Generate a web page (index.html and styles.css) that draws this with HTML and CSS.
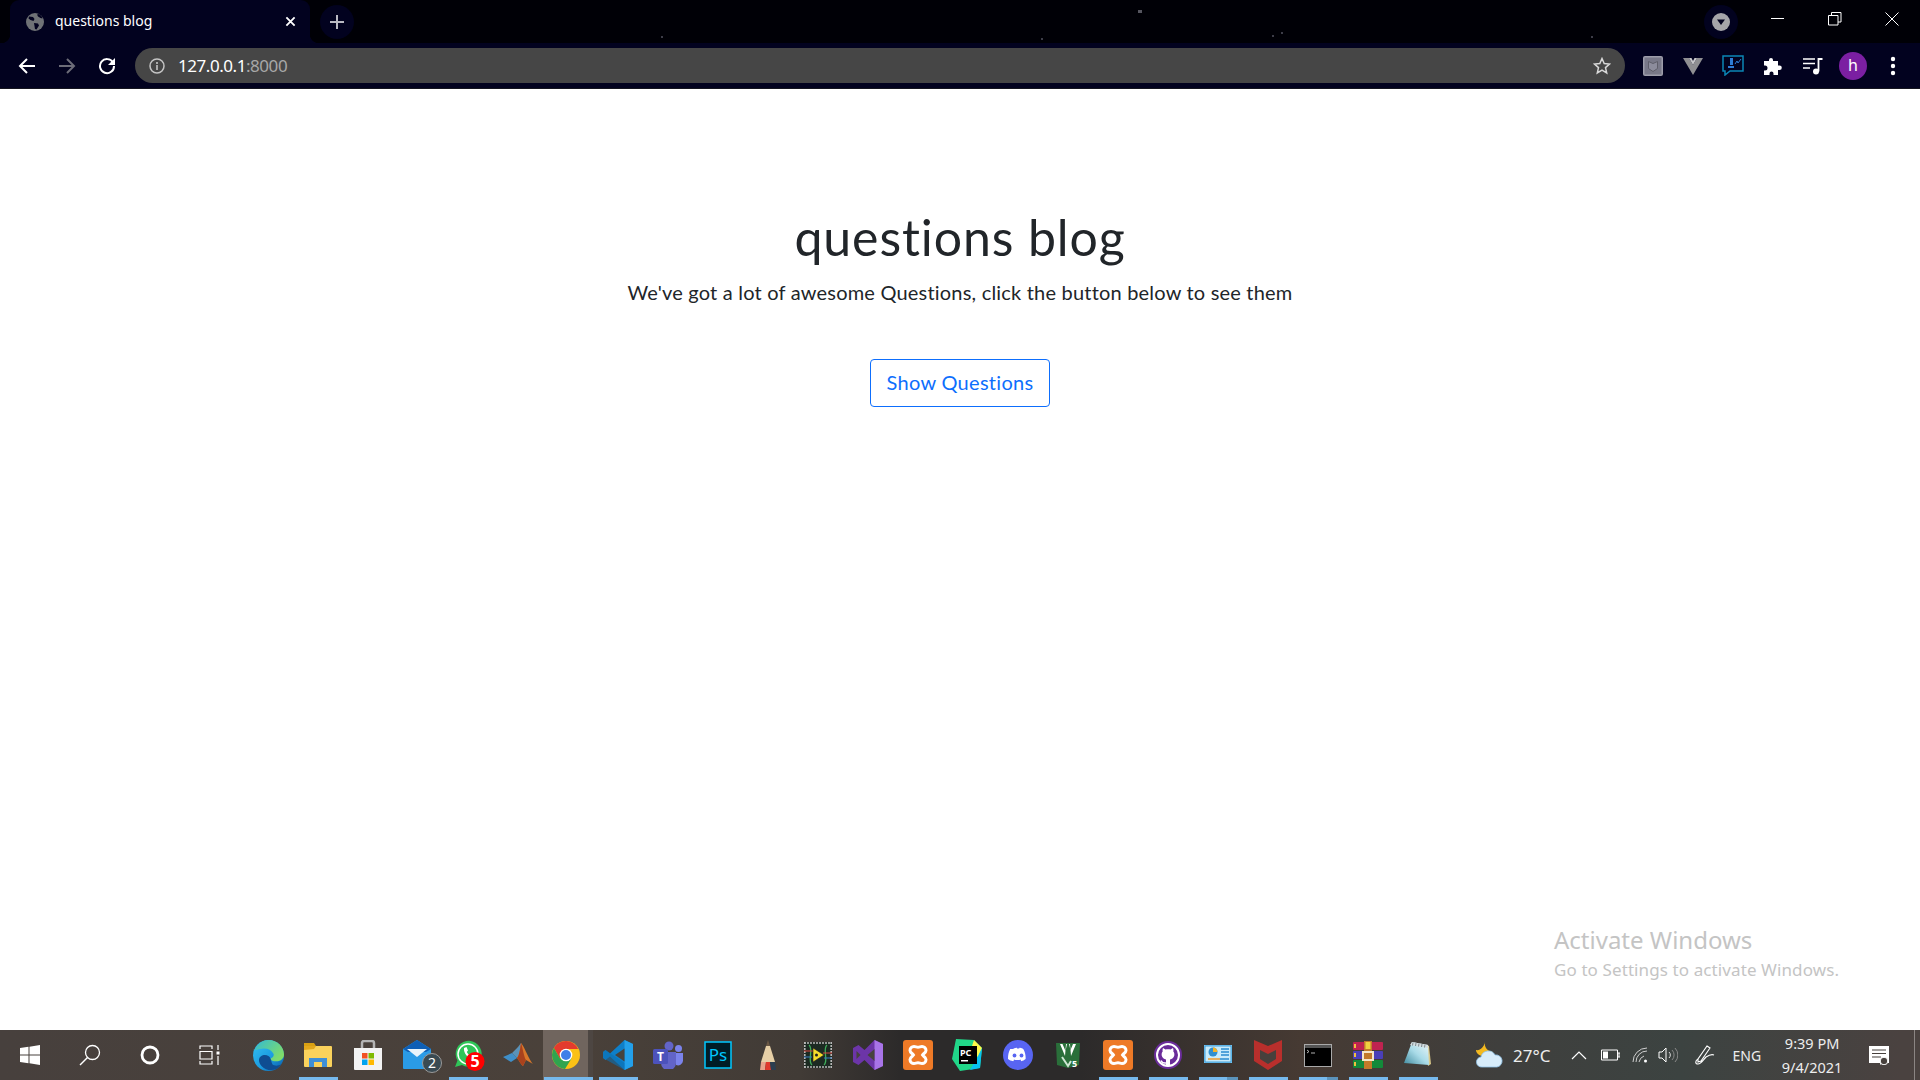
FILE: index.html
```html
<!DOCTYPE html>
<html lang="en">

<head>
    <meta charset="UTF-8">
    <meta name="viewport" content="width=device-width, initial-scale=1.0">
    <title>questions blog</title>
    <link rel="stylesheet" href="styles.css">
</head>

<body>

    <!-- browser tab row -->
    <div class="tabstrip">
        <i class="speck s1"></i><i class="speck s2"></i><i class="speck s3"></i><i class="speck s4"></i><i class="speck s5"></i><i class="speck s6"></i>
        <div class="tab">
            <svg class="favicon" viewBox="0 0 18 18"><circle cx="9" cy="9" r="9" fill="#6f7276"/><path d="M3 3.5l4 .5 1.5 2-1 2-3-1-2-1.500zM8 10l4 .5 1 2-2.500 4-1.500-.5-.5-3zM11 1.500l1 2 2.500 1.500 2 .5-1-2.500-2.500-2z" fill="#02021f"/></svg>
            <span class="tab-title">questions blog</span>
            <svg class="tab-close" viewBox="0 0 12 12"><path d="M1.5 1.5l9 9M10.5 1.5l-9 9" stroke="#fff" stroke-width="2"/></svg>
        </div>
        <div class="new-tab">
            <svg viewBox="0 0 16 16" width="16" height="16"><path d="M8 1v14M1 8h14" stroke="#b9b9c2" stroke-width="2"/></svg>
        </div>
        <div class="strip-spacer"></div>
        <div class="profile-drop">
            <svg viewBox="0 0 18 18" width="18" height="18"><circle cx="9" cy="9" r="9" fill="#a5a5a9"/><path d="M5 6.5h8L9 12z" fill="#02021f"/></svg>
        </div>
        <div class="win-btn">
            <svg viewBox="0 0 14 14" width="14" height="14"><path d="M0 6.5h13" stroke="#fff"/></svg>
        </div>
        <div class="win-btn">
            <svg viewBox="0 0 14 14" width="14" height="14"><path d="M.5 3.5h9.5v9.5h-9.500zM3.500 3.500v-3h9.500v9.500h-3" stroke="#fff" fill="none"/></svg>
        </div>
        <div class="win-btn">
            <svg viewBox="0 0 14 14" width="14" height="14"><path d="M.5.5l13 13M13.500.5l-13 13" stroke="#fff"/></svg>
        </div>
    </div>

    <!-- toolbar -->
    <div class="toolbar">
        <div class="nav-btn">
            <svg viewBox="0 0 18 18" width="18" height="18"><path d="M17 9H2M9 2L2 9l7 7" stroke="#fff" stroke-width="2" fill="none"/></svg>
        </div>
        <div class="nav-btn">
            <svg viewBox="0 0 18 18" width="18" height="18"><path d="M1 9h15M9 2l7 7-7 7" stroke="#6c6c78" stroke-width="2" fill="none"/></svg>
        </div>
        <div class="nav-btn">
            <svg viewBox="0 0 18 18" width="18" height="18"><path d="M15 5.5A7 7 0 1 0 16 9" stroke="#fff" stroke-width="2" fill="none"/><path d="M17 1v7h-7z" fill="#fff"/></svg>
        </div>
        <div class="omnibox">
            <svg class="info-icon" viewBox="0 0 16 16" width="16" height="16"><circle cx="8" cy="8" r="7" stroke="#c4c4c4" stroke-width="1.5" fill="none"/><path d="M8 7v5M8 4v2" stroke="#c4c4c4" stroke-width="1.6"/></svg>
            <span class="url">127.0.0.1<span class="url-port">:8000</span></span>
            <svg class="star" viewBox="0 0 18 18" width="18" height="18"><path d="M9 1.5l2.200 5 5.300.5-4 3.600 1.200 5.300L9 13.100 4.300 15.900l1.200-5.300-4-3.600 5.300-.5z" stroke="#d8d8d8" stroke-width="1.5" fill="none"/></svg>
        </div>
        <div class="ext">
            <svg viewBox="0 0 20 20" width="20" height="20"><rect width="20" height="20" rx="2" fill="#9d9daa"/><rect x="1.5" y="1.5" width="17" height="17" fill="#787888"/><path d="M5.500 5.500l4.500 2 4.500-2v7l-4.500 3-4.500-3z" fill="#8c8c9c" stroke="#5e5e6a"/></svg>
        </div>
        <div class="ext">
            <svg viewBox="0 0 20 18" width="20" height="18"><path d="M0 1h6l4 7 4-7h6L10 18z" fill="#8f8f92"/><path d="M6 1h2.500L10 4l1.500-3H14l-4 7z" fill="#c8c8ca"/></svg>
        </div>
        <div class="ext">
            <svg viewBox="0 0 22 21" width="22" height="21"><path d="M1 1h20v15H8l-5 4v-4H1z" fill="none" stroke="#0b86b5" stroke-width="1.5"/><path d="M8 3h3v7H8zM6 11h6v2H6z" fill="#2e7cd6"/><path d="M13 9l2-3 1 2 3-4" stroke="#2e7cd6" fill="none"/></svg>
        </div>
        <div class="ext">
            <svg viewBox="0 0 18 18" width="18" height="18"><path d="M7 1a2 2 0 0 1 2 2v1h5v4.500h1.500a2.300 2.300 0 0 1 0 4.600H14V18H9.500v-1.500a2 2 0 0 0-4 0V18H0v-4.500h1a2.500 2.500 0 0 0 0-5H0V4h5V3a2 2 0 0 1 2-2z" fill="#fff"/></svg>
        </div>
        <div class="ext">
            <svg viewBox="0 0 20 18" width="20" height="18"><path d="M0 2h12M0 6.5h12M0 11h7" stroke="#fff" stroke-width="1.5"/><circle cx="13" cy="14.500" r="3" fill="#fff"/><path d="M15.500 14.500V2h4" stroke="#fff" stroke-width="1.8" fill="none"/></svg>
        </div>
        <div class="ext">
            <span class="avatar">h</span>
        </div>
        <div class="ext">
            <svg viewBox="0 0 6 20" width="6" height="20"><circle cx="3" cy="3" r="2.200" fill="#fff"/><circle cx="3" cy="10" r="2.200" fill="#fff"/><circle cx="3" cy="17" r="2.200" fill="#fff"/></svg>
        </div>
    </div>

    <main class="page">
        <section class="hero">
            <h1 class="hero-title">questions blog</h1>
            <p class="hero-text">We've got a lot of awesome Questions, click the button below to see them</p>
            <a class="btn-outline" href="#">Show Questions</a>
        </section>
        <div class="watermark">
            <div class="wm-big">Activate Windows</div>
            <div class="wm-small">Go to Settings to activate Windows.</div>
        </div>
    </main>

    <!-- windows taskbar -->
    <div class="taskbar">
        <div class="sys-btn">
            <svg viewBox="0 0 20 20" width="20" height="20"><path d="M0 3l8.500-1.200v7.700H0zM9.500 1.700L20 0v9.500H9.500zM0 10.500h8.500v7.700L0 17zM9.500 10.500H20V20L9.500 18.300z" fill="#fff"/></svg>
        </div>
        <div class="sys-btn">
            <svg viewBox="0 0 22 22" width="22" height="22"><circle cx="13.500" cy="8.500" r="7" stroke="#fff" stroke-width="1.3" fill="none"/><path d="M8.500 13.500L1 21" stroke="#fff" stroke-width="1.5"/></svg>
        </div>
        <div class="sys-btn">
            <svg viewBox="0 0 20 20" width="20" height="20"><circle cx="10" cy="10" r="8" stroke="#fff" stroke-width="2.8" fill="none"/></svg>
        </div>
        <div class="sys-btn">
            <svg viewBox="0 0 22 20" width="22" height="20"><path d="M1 4V1h12v3M1 16v3h12v-3M1 6.500h12v7.500H1zM19 0v5M19 11v9" stroke="#fff" stroke-width="1.2" fill="none"/><rect x="17.500" y="6.500" width="3" height="3" fill="#fff"/></svg>
        </div>

        <div class="apps">
            <!-- edge -->
            <div class="app">
                <svg viewBox="0 0 32 32" width="31" height="31"><defs><linearGradient id="edgeA" x1="0" y1="0" x2="1" y2="1"><stop offset="0" stop-color="#35c1f1"/><stop offset=".55" stop-color="#1b9de2"/><stop offset="1" stop-color="#0c59a4"/></linearGradient><linearGradient id="edgeB" x1="0" y1="0" x2="1" y2=".6"><stop offset="0" stop-color="#2fb9d8"/><stop offset="1" stop-color="#7fdc6a"/></linearGradient></defs><circle cx="16" cy="16" r="16" fill="url(#edgeA)"/><path d="M2 10C5 3 11 0 16 0c9 0 16 7 16 15 0 4-3 7-8 7-3 0-6-1-6-3 3-1 4-3 3-5-2-4-7-6-12-5-4 .5-7 2-9 1z" fill="url(#edgeB)"/><path d="M18 19c-1-3-6-5-10-2-3 2-2 7 1 10 4 4 10 5 15 3 2-1 4-3 5-5-3 2-7 2-9 0-1-2-1-4-2-6z" fill="#0f4d92"/></svg>
            </div>
            <!-- file explorer -->
            <div class="app on">
                <svg viewBox="0 0 30 26" width="30" height="26"><path d="M1 1h10l2 3h-12z" fill="#d9a012"/><rect x="1" y="4" width="28" height="21" rx="1" fill="#fad25c"/><path d="M1 8l10-1 2-3h-12z" fill="#e3a81d"/><path d="M6 25v-9h18v9h-5v-5h-8v5z" fill="#3f8fd6"/></svg>
            </div>
            <!-- store -->
            <div class="app">
                <svg viewBox="0 0 30 31" width="30" height="31"><path d="M9 8V3a2 2 0 0 1 2-2h8a2 2 0 0 1 2 2v5" stroke="#b4b4b4" stroke-width="2.5" fill="none"/><path d="M1 8h28v21a1 1 0 0 1-1 1H2a1 1 0 0 1-1-1z" fill="#f3f3f3"/><rect x="9" y="13" width="5.500" height="5.500" fill="#f25022"/><rect x="15.500" y="13" width="5.500" height="5.500" fill="#7fba00"/><rect x="9" y="19.500" width="5.500" height="5.500" fill="#00a4ef"/><rect x="15.500" y="19.500" width="5.500" height="5.500" fill="#ffb900"/></svg>
            </div>
            <!-- mail -->
            <div class="app">
                <svg viewBox="0 0 40 36" width="40" height="36" class="app-wide"><path d="M1 12L15 3l14 9v19a1 1 0 0 1-1 1H2a1 1 0 0 1-1-1z" fill="#2a9be6"/><path d="M15 3L1 12l5 3h18l5-3z" fill="#0f5fb5"/><path d="M5 12h20l-10 8z" fill="#e8f4fb"/><circle cx="30" cy="26" r="9.500" fill="#3a4a52" stroke="#9a9a9a"/><text x="30" y="31" class="svg-badge" fill="#fff">2</text></svg>
            </div>
            <!-- whatsapp -->
            <div class="app on">
                <svg viewBox="0 -2 36 36" width="36" height="36" class="app-wide"><path d="M1 28l2.500-6.500A13 13 0 1 1 8 26z" fill="#2fc558"/><circle cx="14" cy="15" r="10" fill="none" stroke="#fff" stroke-width="1.5"/><path d="M10 9l2.500-1 1.500 3.500-1.200 1.500c.8 1.500 1.700 2.500 3 3l1.500-1.200 2 1.500-.8 2.700c-4.500.5-9-5-8.500-9.500z" fill="#fff"/><circle cx="21" cy="22.500" r="9.500" fill="#f00"/><text x="21" y="28" class="svg-badge svg-badge-big" fill="#fff">5</text></svg>
            </div>
            <!-- matlab -->
            <div class="app">
                <svg viewBox="0 0 30 28" width="30" height="28"><path d="M0 16l9-4 5 5-6 4z" fill="#3f8fc9"/><path d="M9 12l6-6 3-4 3 10-7 5z" fill="#5a92b8"/><path d="M18 2c3 3 6 12 11 20l1 1-7-4-3 6c-2-1-4-6-6-8 3-4 3-10 4-15z" fill="#d9772a"/><path d="M18 2c2 6 3 14 5 17l-3 6c-2-1-4-6-6-8 3-4 3-10 4-15z" fill="#a9421d"/></svg>
            </div>
            <!-- chrome -->
            <div class="app active on">
                <svg viewBox="0 0 28 28" width="28" height="28"><circle cx="14" cy="14" r="14" fill="#fbc116"/><path d="M14 0a14 14 0 0 0-12.100 7l6 10.500L14 8h12.100A14 14 0 0 0 14 0z" fill="#e33b2e"/><path d="M1.900 7A14 14 0 0 0 13 28l6.500-10.500L8 17.500z" fill="#2fa44f"/><circle cx="14" cy="14" r="6.300" fill="#fff"/><circle cx="14" cy="14" r="5" fill="#3f7fe8"/></svg>
            </div>
            <!-- vs code -->
            <div class="app on">
                <svg viewBox="0 0 30 30" width="30" height="30"><path d="M21.500 0L30 4v22l-8.500 4L7 16.500 2.500 20 0 18v-6l2.500-2L7 13.500z" fill="#0e7fc9"/><path d="M21.500 0L30 4v22l-8.500 4z" fill="#23a0ea"/><path d="M21.500 8.500L12 15l9.500 6.500z" fill="#47433d"/><path d="M0 12l2.500-2L21.500 23v7L0 18z" fill="#0b6fb3" opacity=".6"/></svg>
            </div>
            <!-- teams -->
            <div class="app">
                <svg viewBox="0 0 30 28" width="30" height="28"><circle cx="16" cy="5" r="4.500" fill="#6264c8"/><circle cx="25.500" cy="7.500" r="3.500" fill="#7b83eb"/><path d="M21 12h9v8a5 5 0 0 1-7 4z" fill="#7b83eb"/><path d="M8 11h15v11a7.500 7.500 0 0 1-15 0z" fill="#6264c8"/><rect y="8" width="15" height="15" rx="1.500" fill="#4c52bb"/><text x="7.500" y="20" class="svg-teams" fill="#fff">T</text></svg>
            </div>
            <!-- photoshop -->
            <div class="app">
                <svg viewBox="0 0 28 28" width="28" height="28"><rect x="1" y="1" width="26" height="26" fill="#001d26" stroke="#00c8ff" stroke-width="1.5"/><text x="14" y="20" class="svg-ps" fill="#00c8ff">Ps</text></svg>
            </div>
            <!-- pencil -->
            <div class="app">
                <svg viewBox="0 0 18 30" width="18" height="30"><path d="M9 0l2 6H7z" fill="#6b5844"/><path d="M7 6h4l5 16H2z" fill="#e6cfa6"/><path d="M2 22l-1 8h5l1-8z" fill="#e8a48c"/><path d="M7 22l-1 8h6l-1-8z" fill="#e03a2e"/><path d="M11 22l1 8h5l-1-8z" fill="#2c3e50"/></svg>
            </div>
            <!-- labview -->
            <div class="app">
                <svg viewBox="0 0 28 26" width="28" height="26"><rect width="28" height="26" rx="1" fill="#1c2a22"/><path d="M.8 0v26M27.200 0v26M0 1h28M0 25h28" stroke="#b8b8b8" stroke-width="1.6" stroke-dasharray="2 1"/><path d="M5 3c5 4-2 16 3 20M23 3c-5 4 2 16-3 20" stroke="#3fae5a" stroke-width="1.3" fill="none"/><path d="M0 9h9M19 11h9" stroke="#d8453e" stroke-width="1.2"/><path d="M0 15h8M20 16h8" stroke="#3b7cc4" stroke-width="1.2"/><path d="M9 6l11 7-11 7z" fill="#f6dc2a" stroke="#222" stroke-width=".6"/><circle cx="12.500" cy="13" r="1.500" fill="#222"/></svg>
            </div>
            <!-- visual studio -->
            <div class="app">
                <svg viewBox="0 0 30 30" width="30" height="30"><path d="M21.500 0L30 4v22l-8.500 4-10-10-6 5L0 22V8l5.500-3 6 5z" fill="#6c35a8"/><path d="M21.500 0L30 4v22l-8.500 4z" fill="#a874e8"/><path d="M3.500 11v8l4-4zM21.500 9l-7 6 7 6z" fill="#47433d"/></svg>
            </div>
            <!-- xampp -->
            <div class="app">
                <svg viewBox="0 0 30 30" width="30" height="30"><rect width="30" height="30" rx="3" fill="#ee7a27"/><path d="M7 10.500a4 4 0 0 1 4-4c1.500 0 2.500.8 4 .8s2.500-.8 4-.8a4 4 0 0 1 4 4c0 2-2.500 3-3.500 4.500 1 1.500 3.500 2.500 3.500 4.500a4 4 0 0 1-4 4c-1.500 0-2.500-.8-4-.8s-2.500.8-4 .8a4 4 0 0 1-4-4c0-2 2.500-3 3.500-4.500-1-1.500-3.500-2.500-3.500-4.500z" stroke="#fff" stroke-width="3" fill="none"/></svg>
            </div>
            <!-- pycharm -->
            <div class="app">
                <svg viewBox="0 0 32 32" width="32" height="32"><path d="M4 0l18 1 8 8-2 20-20 3-8-12z" fill="#21d789"/><path d="M22 1l8 8-4 10-6-12z" fill="#fcf84a"/><path d="M30 9l-2 20-10 2 8-14z" fill="#07c3f2"/><rect x="7" y="7" width="18" height="18" fill="#000"/><text x="8" y="17" class="svg-pc" fill="#fff">PC</text><rect x="9" y="21" width="7" height="1.500" fill="#fff"/></svg>
            </div>
            <!-- discord -->
            <div class="app">
                <svg viewBox="0 0 30 30" width="30" height="30"><circle cx="15" cy="15" r="15" fill="#5865f2"/><path d="M9.500 9c2-1 3.500-1.200 4-1.200l.4.800c.8-.1 1.500-.1 2.200 0l.4-.8c.5 0 2 .2 4 1.200 2 3.200 2.800 6.500 2.500 10-1.600 1.200-3 1.800-4.500 2.200l-1-1.500.9-.5c-2.800 1.200-5.800 1.200-8.600 0l.9.500-1 1.500C7.100 20.800 5.700 20.200 4.100 19c-.1-3.500.5-6.800 2.400-10z" fill="#fff" transform="translate(1.200 0) scale(.93 1)"/><ellipse cx="11.500" cy="15.500" rx="1.900" ry="2.100" fill="#5865f2"/><ellipse cx="18.500" cy="15.500" rx="1.900" ry="2.100" fill="#5865f2"/></svg>
            </div>
            <!-- vim-like green editor -->
            <div class="app">
                <svg viewBox="0 0 26 27" width="26" height="27"><path d="M1 1h24l-1 22-11 3-11-3z" fill="#2a6f3a"/><path d="M5 2l5 12 1-12h4l1 12 5-12h-3l-2.500 6L14 2h-2l-1.500 7-3-7z" fill="#fff"/><path d="M7 15l6 9 3-5" stroke="#cfe6d3" stroke-width="2" fill="none"/><text x="19.500" y="25" class="svg-five" fill="#fff">5</text></svg>
            </div>
            <!-- xampp again -->
            <div class="app on">
                <svg viewBox="0 0 30 30" width="30" height="30"><rect width="30" height="30" rx="3" fill="#ee7a27"/><path d="M7 10.500a4 4 0 0 1 4-4c1.500 0 2.500.8 4 .8s2.500-.8 4-.8a4 4 0 0 1 4 4c0 2-2.500 3-3.500 4.500 1 1.500 3.500 2.500 3.500 4.500a4 4 0 0 1-4 4c-1.500 0-2.500-.8-4-.8s-2.500.8-4 .8a4 4 0 0 1-4-4c0-2 2.500-3 3.500-4.500-1-1.500-3.500-2.500-3.500-4.500z" stroke="#fff" stroke-width="3" fill="none"/></svg>
            </div>
            <!-- github -->
            <div class="app on">
                <svg viewBox="0 0 28 28" width="28" height="28"><circle cx="14" cy="14" r="14" fill="#6a2c9a"/><circle cx="14" cy="14" r="11" fill="none" stroke="#fff" stroke-width="2"/><path d="M9 7l2.500 1.500c1.500-.5 3.500-.5 5 0L19 7c.5 1.500.5 2.500.3 3.500 1 1 1.200 2.500 1 4-.5 2.500-2.300 3.500-4.300 4v6h-4v-6c-2-.5-3.800-1.500-4.300-4-.2-1.500 0-3 1-4C8.500 9.500 8.500 8.500 9 7z" fill="#fff"/><path d="M12 22c-3 .5-4-.5-5-2.500" stroke="#fff" stroke-width="1.5" fill="none"/></svg>
            </div>
            <!-- control panel -->
            <div class="app on stacked">
                <svg viewBox="0 0 28 20" width="28" height="20"><rect width="28" height="18" fill="#7fd0f8"/><rect x="1" y="1" width="26" height="16" fill="#c8ebfb" stroke="#2a8cd0" stroke-width=".8"/><circle cx="9" cy="7" r="4.500" fill="#2f8fd0"/><path d="M9 7V2.500A4.500 4.500 0 0 1 13.500 7z" fill="#f3b32a"/><path d="M17 4h8M17 7h8M17 10h8" stroke="#2a8cd0" stroke-width="1.5"/><path d="M4 14h12" stroke="#f09a2a" stroke-width="1.5"/><path d="M16 14h9" stroke="#2a8cd0" stroke-width="1.5"/></svg>
            </div>
            <!-- mcafee -->
            <div class="app on">
                <svg viewBox="0 0 28 30" width="28" height="30"><path d="M0 0l14 6 14-6v21l-14 9L0 21z" fill="#b92f2c"/><path d="M6 10l8 4 8-4v9l-8 5-8-5z" fill="#47403c"/></svg>
            </div>
            <!-- cmd -->
            <div class="app on stacked">
                <svg viewBox="0 0 28 23" width="28" height="23"><rect width="28" height="23" fill="#a9a9a9"/><rect x="1" y="1" width="26" height="3" fill="#555"/><rect x="1" y="4" width="26" height="18" fill="#000"/><path d="M3 6l2 1.500L3 9M7 9h4" stroke="#ddd" stroke-width=".8" fill="none"/></svg>
            </div>
            <!-- winrar -->
            <div class="app on">
                <svg viewBox="0 0 30 28" width="30" height="28"><rect y="1" width="30" height="8" rx="1" fill="#bf2350"/><rect y="10" width="30" height="8" rx="1" fill="#4a3fb8"/><rect y="19" width="30" height="8" rx="1" fill="#138a3a"/><rect x="11" y="0" width="8" height="28" fill="#c27a2a"/><rect x="12.500" y="1" width="5" height="7" fill="#f0d040"/><rect x="10" y="11" width="10" height="8" fill="none" stroke="#f4e7c8" stroke-width="2"/><path d="M2 3v4M2 12v4M2 21v4" stroke="#f0c040" stroke-width="2"/></svg>
            </div>
            <!-- notepad -->
            <div class="app on">
                <svg viewBox="0 0 28 28" width="28" height="28"><defs><linearGradient id="padGlass" x1="0" y1="1" x2="1" y2="0"><stop offset="0" stop-color="#3f8a9e"/><stop offset=".5" stop-color="#a9dbe8"/><stop offset="1" stop-color="#eef7f9"/></linearGradient></defs><path d="M22 4l3 1 2 18-3 2z" fill="#d9c88a"/><path d="M8 1l16 3 1 20-25-2z" fill="url(#padGlass)"/><path d="M8 1l16 3 .3 3L6 4z" fill="#d4dcdf"/><path d="M9 1.500l-.5 3M12 2l-.5 3M15 2.500l-.5 3M18 3l-.5 3M21 3.500l-.5 3" stroke="#7d8a8f"/></svg>
            </div>
        </div>

        <div class="tray">
            <svg class="tray-weather" viewBox="0 0 28 26" width="28" height="26"><path d="M10 0c-1 5 2 9 8 10l-6 5c-6 0-11-3-11-7 4 1 8-3 9-8z" fill="#f3b91f"/><path d="M7 25a5 5 0 0 1-1-10 7.500 7.500 0 0 1 14-2 6 6 0 0 1 2 12z" fill="#d7ecfa" stroke="#8fc3e8" stroke-width=".8"/></svg>
            <span class="tray-temp">27°C</span>
            <svg class="tray-chevron" viewBox="0 0 16 10" width="16" height="10"><path d="M1 9l7-7 7 7" stroke="#fff" stroke-width="1.2" fill="none"/></svg>
            <svg class="tray-battery" viewBox="0 0 19 12" width="19" height="12"><path d="M.5 1h16v10h-16zM17 4h2v4h-2z" stroke="#fff" fill="none"/><rect x="2" y="2.500" width="5" height="7" fill="#fff"/></svg>
            <svg class="tray-wifi" viewBox="0 0 16 16" width="16" height="16"><path d="M1 15a14 14 0 0 1 14-14M4 15a11 11 0 0 1 11-11" stroke="#d0d0d0" fill="none"/><path d="M7 15a8 8 0 0 1 5-6" stroke="#d0d0d0" fill="none"/><circle cx="13.500" cy="14" r="1.500" fill="#fff"/></svg>
            <svg class="tray-volume" viewBox="0 0 20 16" width="20" height="16"><path d="M1 5h3l4-4v14l-4-4H1z" stroke="#fff" fill="none"/><path d="M11 5a4 4 0 0 1 0 6" stroke="#ddd" fill="none"/><path d="M14 3a7 7 0 0 1 0 10M17 1a10 10 0 0 1 0 14" stroke="#888" fill="none"/></svg>
            <svg class="tray-pen" viewBox="0 0 20 20" width="20" height="20"><path d="M12 1l3 2-9 13-3 1v-3zM3 14c-3 2-3 5 0 5s5-4 8-7c3-2 6-3 8-2" stroke="#fff" stroke-width="1.1" fill="none"/></svg>
            <span class="tray-lang">ENG</span>
            <div class="tray-clock">
                <div>9:39 PM</div>
                <div>9/4/2021</div>
            </div>
            <svg class="tray-notify" viewBox="0 0 20 19" width="20" height="19"><path d="M0 0h20v17h-7l-2 2v-2H0z" fill="#fff"/><path d="M3 4h14M3 7.500h14M3 11h9" stroke="#47403c" stroke-width="1.2"/><circle cx="15" cy="15" r="3.800" fill="#47403c" stroke="#fff"/></svg>
            <div class="show-desktop"></div>
        </div>
    </div>

</body>

</html>
```

FILE: styles.css
```css
* {
    box-sizing: border-box;
}

body {
    margin: 0;
    height: 100vh;
    overflow: hidden;
    display: flex;
    flex-direction: column;
    background-color: #fff;
    font-family: "Noto Sans", sans-serif;
}

svg {
    display: block;
    flex-shrink: 0;
}

/* tab row */
.tabstrip {
    position: relative;
    height: 43px;
    display: flex;
    align-items: center;
    padding-left: 10px;
    background-color: #000006;
}

.speck {
    position: absolute;
    width: 2px;
    height: 2px;
    background-color: #3d3d48;
}

.s1 { left: 1138px; top: 10px; width: 4px; height: 3px; background-color: #55555f; }
.s2 { left: 661px; top: 36px; }
.s3 { left: 1041px; top: 38px; }
.s4 { left: 1272px; top: 35px; }
.s5 { left: 1281px; top: 32px; }
.s6 { left: 1591px; top: 36px; }

.tab {
    position: relative;
    width: 300px;
    height: 43px;
    display: flex;
    align-items: center;
    padding: 0 14px 0 16px;
    background-color: #02021f;
    border-radius: 9px 9px 0 0;
    color: #fff;
}

.tab::before,
.tab::after {
    content: "";
    position: absolute;
    bottom: 0;
    width: 9px;
    height: 9px;
}

.tab::before {
    left: -9px;
    background: radial-gradient(circle at 0 0, transparent 9px, #02021f 9.5px);
}

.tab::after {
    right: -9px;
    background: radial-gradient(circle at 100% 0, transparent 9px, #02021f 9.5px);
}

.favicon {
    width: 18px;
    height: 18px;
    margin-right: 11px;
}

.tab-title {
    flex: 1;
    padding-bottom: 2px;
    font-size: 14px;
}

.tab-close {
    width: 11px;
    height: 11px;
}

.new-tab {
    width: 34px;
    height: 34px;
    margin-left: 10px;
    border-radius: 50%;
    background-color: #02021f;
    display: flex;
    align-items: center;
    justify-content: center;
}

.strip-spacer {
    flex: 1;
}

.profile-drop {
    width: 34px;
    height: 34px;
    margin-right: 11px;
    border-radius: 50%;
    background-color: #02021f;
    display: flex;
    align-items: center;
    justify-content: center;
}

.win-btn {
    width: 57px;
    height: 43px;
    padding-bottom: 6px;
    display: flex;
    align-items: center;
    justify-content: center;
}

/* toolbar */
.toolbar {
    height: 46px;
    display: flex;
    align-items: center;
    padding: 0 7px 0 7px;
    background-color: #02021f;
    border-bottom: 1px solid #15151f;
}

.nav-btn {
    width: 40px;
    display: flex;
    justify-content: center;
}

.omnibox {
    flex: 1;
    height: 35px;
    margin: 0 8px;
    padding: 0 14px;
    display: flex;
    align-items: center;
    border-radius: 18px;
    background-color: #464646;
}

.info-icon {
    margin-right: 13px;
}

.url {
    flex: 1;
    font-size: 17px;
    letter-spacing: -0.45px;
    color: #fff;
}

.url-port {
    color: #a8a8a8;
}

.ext {
    width: 40px;
    display: flex;
    justify-content: center;
}

.avatar {
    width: 28px;
    height: 28px;
    border-radius: 50%;
    background-color: #7b1fa2;
    color: #fff;
    font-size: 16px;
    line-height: 27px;
    text-align: center;
}

/* page */
.page {
    position: relative;
    flex: 1;
}

.hero {
    display: flex;
    flex-direction: column;
    align-items: center;
    padding-top: 111px;
    color: #212529;
    font-family: Lato, sans-serif;
}

.hero-title {
    margin: 0;
    font-size: 50px;
    font-weight: 400;
    line-height: 74px;
    letter-spacing: 0.9px;
}

.hero-text {
    margin: 0;
    font-size: 20px;
    line-height: 36px;
    letter-spacing: 0.2px;
}

.btn-outline {
    margin-top: 49px;
    width: 180px;
    height: 48px;
    padding-bottom: 2px;
    display: flex;
    align-items: center;
    justify-content: center;
    border: 1px solid #0d6efd;
    border-radius: 4px;
    color: #0d6efd;
    font-size: 20px;
    letter-spacing: 0.3px;
    text-decoration: none;
}

.watermark {
    position: absolute;
    left: 1554px;
    top: 835px;
    color: #c4c4c4;
}

.wm-big {
    font-size: 24px;
    line-height: 32px;
}

.wm-small {
    margin-top: 2px;
    font-size: 17px;
    line-height: 24px;
    letter-spacing: 0.1px;
}

/* taskbar */
.taskbar {
    height: 50px;
    display: flex;
    align-items: center;
    background: linear-gradient(90deg, #47403d 0, #4a413a 560px, #413b36 800px, #2c2a2a 900px, #2c2a2a 1080px, #463a33 1300px, #3f3f3d 1500px, #3c4341 1680px, #4a4240 1900px);
}

.sys-btn {
    width: 60px;
    display: flex;
    justify-content: center;
}

.apps {
    display: flex;
    margin-left: 3px;
}

.app {
    position: relative;
    width: 50px;
    height: 50px;
    display: flex;
    align-items: center;
    justify-content: center;
}

.app-wide {
    margin-right: -8px;
}

.app.on::after {
    content: "";
    position: absolute;
    left: 6px;
    right: 5px;
    bottom: 0;
    height: 3px;
    background-color: #76b9ed;
}

.app.active {
    padding-right: 4px;
    background: linear-gradient(90deg, #70655e 45px, #4d4642 45px);
}

.app.active::after {
    left: 1px;
    right: 0;
}

.app.stacked::before {
    content: "";
    position: absolute;
    left: 34px;
    right: 5px;
    bottom: 0;
    height: 3px;
    background-color: #5b93bb;
    z-index: 1;
}

.svg-badge {
    font-family: "Noto Sans", sans-serif;
    font-size: 14px;
    text-anchor: middle;
}

.svg-badge-big {
    font-size: 16px;
    font-weight: 700;
}

.svg-teams {
    font-family: "Noto Sans", sans-serif;
    font-size: 12px;
    font-weight: 700;
    text-anchor: middle;
}

.svg-ps {
    font-family: "Noto Sans", sans-serif;
    font-size: 17px;
    text-anchor: middle;
}

.svg-pc {
    font-family: "Noto Sans", sans-serif;
    font-size: 9px;
    font-weight: 700;
}

.svg-five {
    font-family: "Noto Sans", sans-serif;
    font-size: 9px;
    font-weight: 700;
    text-anchor: middle;
}

.tray {
    flex: 1;
    height: 50px;
    display: flex;
    align-items: center;
    color: #fff;
}

.tray-weather {
    margin-left: 32px;
}

.tray-temp {
    margin-left: 10px;
    font-size: 17px;
    color: #ededed;
}

.tray-chevron {
    margin-left: 21px;
}

.tray-battery {
    margin-left: 14px;
}

.tray-wifi {
    margin-left: 12px;
}

.tray-volume {
    margin-left: 10px;
}

.tray-pen {
    margin-left: 17px;
}

.tray-lang {
    margin-left: 17px;
    font-size: 14px;
    color: #ededed;
}

.tray-clock {
    width: 80px;
    margin-left: 11px;
    font-size: 14.5px;
    line-height: 24px;
    text-align: center;
    color: #ededed;
}

.tray-notify {
    margin-left: 17px;
}

.show-desktop {
    margin-left: auto;
    width: 6px;
    height: 50px;
    border-left: 1px solid #8b8583;
}
```
